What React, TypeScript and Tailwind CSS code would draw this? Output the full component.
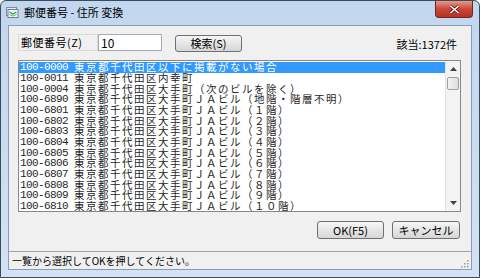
import React from 'react';

const rows: Array<[string, string]> = [
  ['100-0000', '東京都千代田区以下に掲載がない場合'],
  ['100-0011', '東京都千代田区内幸町'],
  ['100-0004', '東京都千代田区大手町（次のビルを除く）'],
  ['100-6890', '東京都千代田区大手町ＪＡビル（地階・階層不明）'],
  ['100-6801', '東京都千代田区大手町ＪＡビル（１階）'],
  ['100-6802', '東京都千代田区大手町ＪＡビル（２階）'],
  ['100-6803', '東京都千代田区大手町ＪＡビル（３階）'],
  ['100-6804', '東京都千代田区大手町ＪＡビル（４階）'],
  ['100-6805', '東京都千代田区大手町ＪＡビル（５階）'],
  ['100-6806', '東京都千代田区大手町ＪＡビル（６階）'],
  ['100-6807', '東京都千代田区大手町ＪＡビル（７階）'],
  ['100-6808', '東京都千代田区大手町ＪＡビル（８階）'],
  ['100-6809', '東京都千代田区大手町ＪＡビル（９階）'],
  ['100-6810', '東京都千代田区大手町ＪＡビル（１０階）'],
];

const ui = { fontFamily: '"Noto Sans CJK JP", "Noto Sans", sans-serif' };
const mono = { fontFamily: '"Liberation Mono", monospace' };

function WinButton({ label, className }: { label: string; className: string }) {
  return (
    <button
      className={`flex items-center justify-center rounded-[3px] border border-[#707070] bg-gradient-to-b from-[#f6f6f6] via-[#e6e6e6] to-[#d6d6d6] text-[11px] text-black ${className}`}
      style={ui}
    >
      {label}
    </button>
  );
}

function AppIcon() {
  return (
    <svg width="14" height="13" viewBox="0 0 14 13">
      <rect x="1.5" y="1.5" width="10" height="8" fill="#e8eef6" stroke="#7c8ca4" />
      <rect x="3" y="3.5" width="10" height="8" fill="#f4f8fc" stroke="#6c7c94" />
      <path d="M4.5 6 L8 8 L11.5 6" stroke="#2fa04a" strokeWidth="1.4" fill="none" />
      <path d="M4.5 8.5 L8 10 L11.5 8.5" stroke="#58b86a" strokeWidth="1" fill="none" />
    </svg>
  );
}

export default function App() {
  return (
    <div className="h-[278px] w-[480px] overflow-hidden bg-white">
      <div className="flex h-full w-full flex-col rounded-t-[6px] border border-[#3c4a5c] bg-gradient-to-b from-[#c2d6ef] to-[#d3e2f4]">
        {/* title bar */}
        <div className="flex h-[24px] shrink-0 items-start">
          <div className="ml-[4px] mt-[5px]">
            <AppIcon />
          </div>
          <span className="ml-[5px] mt-[4px] text-[11px] leading-[14px] text-black" style={ui}>
            郵便番号 - 住所 変換
          </span>
          <div className="ml-auto mr-[6px] flex h-[17px] w-[38px] items-center justify-center rounded-b-[4px] border border-t-0 border-[#6b2a22] bg-gradient-to-b from-[#e39a8a] via-[#c9463a] to-[#b8321f]">
            <svg width="11" height="9" viewBox="0 0 11 9">
              <path d="M1.5 1 L9.5 8 M9.5 1 L1.5 8" stroke="#5a1a14" strokeWidth="3" />
              <path d="M1.5 1 L9.5 8 M9.5 1 L1.5 8" stroke="#ffffff" strokeWidth="1.6" />
            </svg>
          </div>
        </div>

        {/* client area */}
        <div className="mx-[7px] flex flex-1 flex-col border border-[#8a9bb3] bg-[#f0f0f0]">
          <div className="mt-[8px] flex h-[18px] items-start pl-[9px] pr-[14px]">
            <div
              className="flex h-[17px] w-[80px] items-center border border-[#d8d8d8] bg-[#f0f0f0] pl-[2px] text-[11px] tracking-[0.5px] text-black"
              style={ui}
            >
              郵便番号(Z)
            </div>
            <div className="flex h-[17px] w-[64px] items-center border border-[#a5acb5] bg-white pl-[2px] text-[12px] text-black" style={ui}>
              10
            </div>
            <WinButton label="検索(S)" className="ml-[13px] mt-[1px] h-[17px] w-[67px]" />
            <span className="ml-auto mt-[3px] text-[11px] leading-[14px] text-black" style={ui}>
              該当:1372件
            </span>
          </div>

          {/* list */}
          <div className="ml-[9px] mr-[10px] mt-[8px] flex h-[152px] border border-[#828790] bg-white">
            <div className="flex-1 overflow-hidden pt-[1px]">
              {rows.map(([code, addr], i) => (
                <div
                  key={code}
                  className={`flex h-[10.667px] items-center whitespace-nowrap pl-[1px] ${
                    i === 0 ? 'bg-[#3399ff] text-white' : 'text-[#262626]'
                  }`}
                >
                  <span className="w-[54px] shrink-0 text-[11px] leading-[10px] tracking-[-0.6px]" style={mono}>
                    {code}
                  </span>
                  <span className="text-[10.5px] leading-[10px] tracking-[1.5px]" style={ui}>
                    {addr}
                  </span>
                </div>
              ))}
            </div>
            <div className="flex w-[15px] shrink-0 flex-col border-l border-[#e4e4e4] bg-[#f3f3f3]">
              <div className="flex h-[16px] items-center justify-center">
                <svg width="7" height="4" viewBox="0 0 7 4">
                  <path d="M0 4 L3.5 0 L7 4 Z" fill="#404040" />
                </svg>
              </div>
              <div className="mx-[1px] h-[13px] rounded-[2px] border border-[#a0a0a0] bg-gradient-to-r from-[#f4f4f4] to-[#dcdcdc]" />
              <div className="flex-1" />
              <div className="flex h-[16px] items-center justify-center">
                <svg width="7" height="4" viewBox="0 0 7 4">
                  <path d="M0 0 L3.5 4 L7 0 Z" fill="#404040" />
                </svg>
              </div>
            </div>
          </div>

          <div className="mt-[9px] flex justify-end gap-[8px] pr-[11px]">
            <WinButton label="OK(F5)" className="h-[18px] w-[67px]" />
            <WinButton label="キャンセル" className="h-[18px] w-[68px]" />
          </div>

          {/* status bar */}
          <div className="mt-auto flex h-[18px] items-center border-t border-[#a0a0a0] bg-[#f0f0f0] pl-[3px]">
            <span className="text-[10px] leading-[12px] text-black" style={ui}>
              一覧から選択してOKを押してください。
            </span>
            <svg className="ml-auto mr-[2px] mt-[6px]" width="8" height="8" viewBox="0 0 8 8">
              <rect x="6" y="0" width="1.5" height="1.5" fill="#9a9a9a" />
              <rect x="3" y="3" width="1.5" height="1.5" fill="#9a9a9a" />
              <rect x="6" y="3" width="1.5" height="1.5" fill="#9a9a9a" />
              <rect x="0" y="6" width="1.5" height="1.5" fill="#9a9a9a" />
              <rect x="3" y="6" width="1.5" height="1.5" fill="#9a9a9a" />
              <rect x="6" y="6" width="1.5" height="1.5" fill="#9a9a9a" />
            </svg>
          </div>
        </div>
        <div className="h-[7px] shrink-0" />
      </div>
    </div>
  );
}
